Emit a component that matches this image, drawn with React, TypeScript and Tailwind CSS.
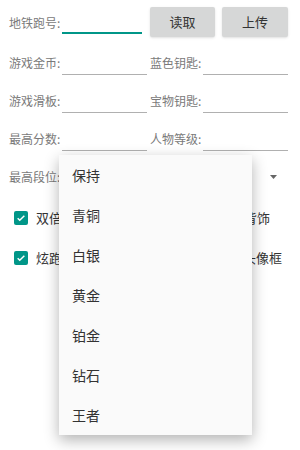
import { useState } from 'react';

const font = { fontFamily: '"Noto Sans CJK SC", "Noto Sans", sans-serif' };

const ranks = ['保持', '青铜', '白银', '黄金', '铂金', '钻石', '王者'];

function Field({ label, width, labelWidth }: { label: string; width: string; labelWidth: string }) {
    return (
        <div className="flex items-end">
            <span className={`${labelWidth} mb-[4px] text-[12px] leading-[16px] text-[#7a7a7a]`}>{label}</span>
            <div className={`${width} h-[22px] border-b-[1.5px] border-[#b0b0b0]`} />
        </div>
    );
}

function Check({ label }: { label: string }) {
    return (
        <div className="flex items-center">
            <div className="flex h-[14px] w-[14px] items-center justify-center rounded-[2px] bg-[#009688]">
                <svg width="10" height="10" viewBox="0 0 24 24" fill="none" stroke="white" strokeWidth="3.5">
                    <path d="M4 12.5l5 5L20 6.5" />
                </svg>
            </div>
            <span className="ml-[8px] text-[13px] leading-[16px] text-[#333]">{label}</span>
        </div>
    );
}

export default function App() {
    const [open] = useState(true);

    return (
        <div className="relative h-[450px] w-[300px] overflow-hidden bg-white" style={font}>
            {/* row 1 */}
            <div className="flex h-[30px] items-start pl-[9px] mt-[7px]">
                <span className="mt-[8px] w-[53px] text-[12px] leading-[16px] text-[#7a7a7a]">地铁跑号:</span>
                <div className="h-[27px] w-[80px] border-b-2 border-[#009688]" />
                <button className="ml-[8px] h-[30px] w-[65px] rounded-[2px] bg-[#d6d7d7] text-[13px] text-[#333] shadow-sm">读取</button>
                <button className="ml-[7px] h-[30px] w-[66px] rounded-[2px] bg-[#d6d7d7] text-[13px] text-[#333] shadow-sm">上传</button>
            </div>

            {/* rows 2-4 */}
            <div className="flex h-[38px] items-end pl-[9px]">
                <Field label="游戏金币:" labelWidth="w-[53px]" width="w-[85px]" />
                <div className="ml-[3px]">
                    <Field label="蓝色钥匙:" labelWidth="w-[53px]" width="w-[85px]" />
                </div>
            </div>
            <div className="flex h-[38px] items-end pl-[9px]">
                <Field label="游戏滑板:" labelWidth="w-[53px]" width="w-[85px]" />
                <div className="ml-[3px]">
                    <Field label="宝物钥匙:" labelWidth="w-[53px]" width="w-[85px]" />
                </div>
            </div>
            <div className="flex h-[38px] items-end pl-[9px]">
                <Field label="最高分数:" labelWidth="w-[53px]" width="w-[85px]" />
                <div className="ml-[3px]">
                    <Field label="人物等级:" labelWidth="w-[53px]" width="w-[85px]" />
                </div>
            </div>

            {/* spinner row */}
            <div className="flex h-[52px] items-center pl-[9px] pr-[23px]">
                <span className="w-[53px] text-[12px] leading-[16px] text-[#7a7a7a]">最高段位:</span>
                <div className="flex-1" />
                <svg width="7" height="4" viewBox="0 0 7 4">
                    <path d="M0 0h7L3.5 4z" fill="#666" />
                </svg>
            </div>

            {/* checkboxes */}
            <div className="flex h-[30px] items-center justify-between pl-[14px] pr-[30px]">
                <Check label="双倍金币" />
                <Check label="解锁背饰" />
            </div>
            <div className="mt-[10px] flex h-[30px] items-center justify-between pl-[14px] pr-[18px]">
                <Check label="炫跑模式" />
                <Check label="解锁头像框" />
            </div>

            {/* dropdown popup */}
            {open && (
                <div className="absolute left-[59px] top-[155px] w-[193px] bg-[#fafafa] shadow-[0_5px_14px_rgba(0,0,0,0.3)]">
                    {ranks.map((r) => (
                        <div key={r} className="flex h-[40px] items-center pl-[13px] text-[14px] text-[#333]">
                            {r}
                        </div>
                    ))}
                </div>
            )}
        </div>
    );
}
